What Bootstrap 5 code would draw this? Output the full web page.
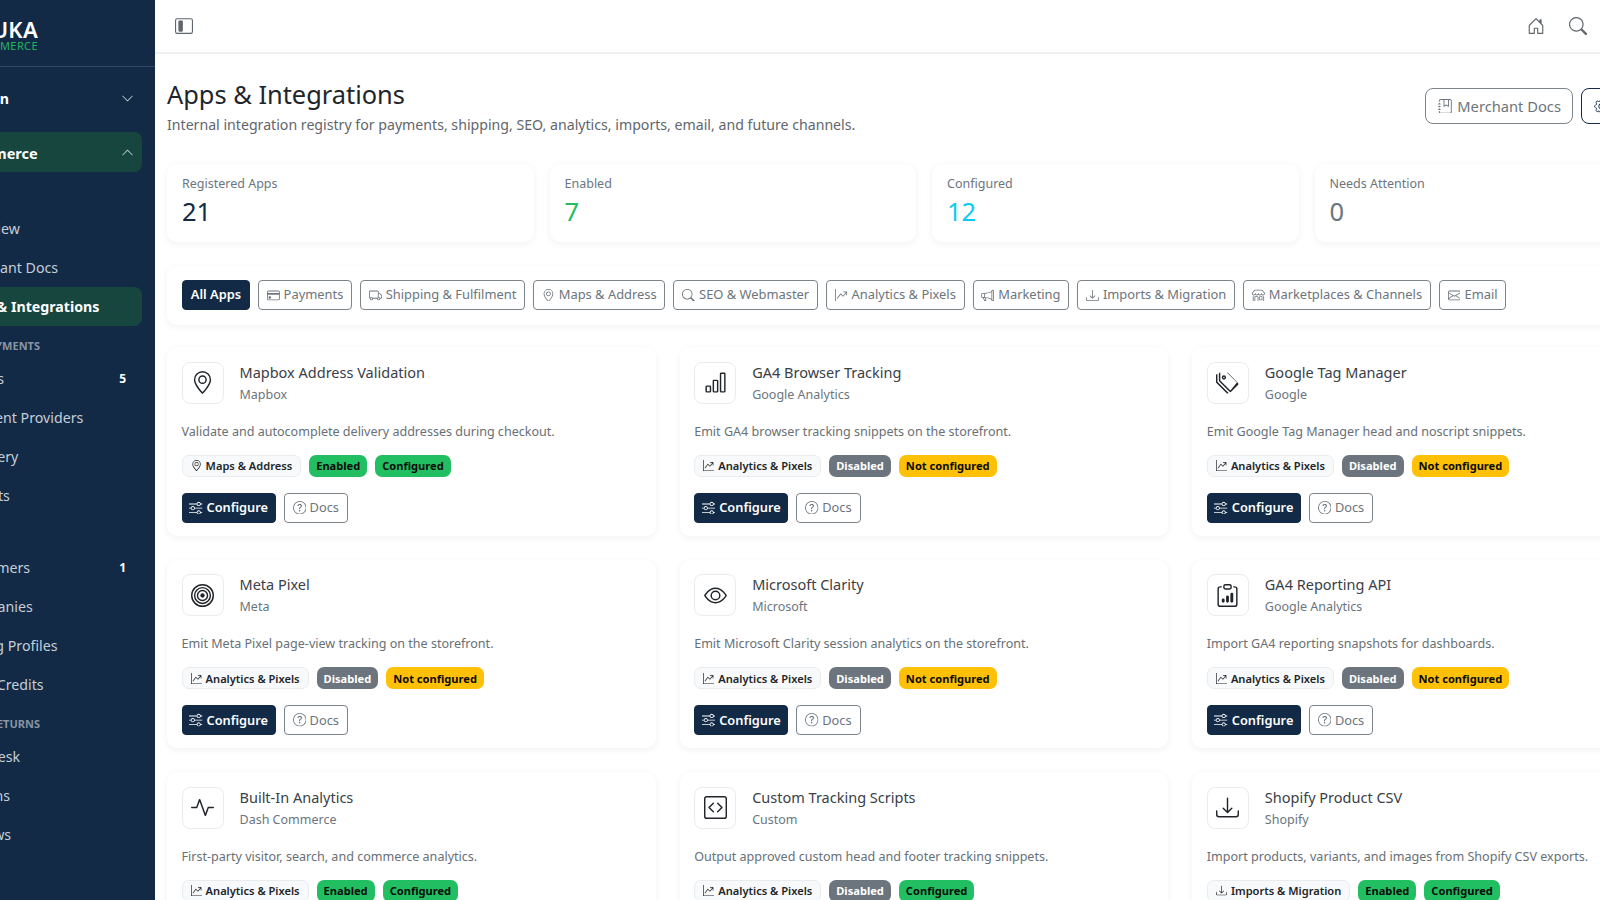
<!DOCTYPE html>
<html lang="en">
<head>
    <meta charset="UTF-8">
    <title>Apps & Integrations</title>
    <link href="https://cdn.jsdelivr.net/npm/bootstrap@5.3.0/dist/css/bootstrap.min.css" rel="stylesheet">
    <style>
        html, body { height: 900px; overflow: hidden; }
        body { font-family: "Noto Sans", sans-serif; font-size: 13px; color: #212529; background: #fff; }
        .ic { width: 1em; height: 1em; fill: currentColor; flex-shrink: 0; }

        .side { width: 260px; margin-left: -105px; flex-shrink: 0; height: 900px; background: #122a46; color: #c5ced8; padding-right: 13px; }
        .side-logo { height: 67px; margin-right: -13px; border-bottom: 1px solid rgba(255,255,255,.15); padding: 19px 0 0; }
        .logo-text { width: 143px; text-align: right; line-height: 1; }
        .logo-top { font-size: 22px; font-weight: 600; color: #fff; letter-spacing: .3px; line-height: 21px; }
        .logo-sub { font-size: 11px; color: #22b35e; letter-spacing: .4px; line-height: 11px; }
        .side-item { height: 39px; padding: 0 8px 0 63px; font-size: 14.2px; display: flex; align-items: center; justify-content: space-between; white-space: nowrap; }
        .side-item .ic { font-size: 13px; color: #c5ced8; }
        .side-top { margin-top: 12px; padding-left: 68px; font-weight: 700; color: #fff; }
        .side-open { height: 40px; margin-top: 14px; margin-bottom: 37px; padding-left: 65px; background: #17463f; border-radius: 8px; color: #fff; font-weight: 700; font-size: 14.5px; }
        .side-open span { padding-top: 3px; }
        .side-active { background: #17463f; border-radius: 8px; color: #fff; font-weight: 700; }
        .side-head { height: 33px; padding: 12px 102px 0 0; text-align: right; font-size: 11px; font-weight: 700; color: #8795a6; line-height: 16px; white-space: nowrap; }
        .side-count { font-size: 12px; font-weight: 700; color: #fff; margin-right: 8px; }

        .main-wrap { flex-grow: 1; min-width: 0; height: 900px; overflow: hidden; }
        .top-bar { height: 54px; border-bottom: 2px solid #eff0f1; padding: 0 13px 0 20px; color: #5f666d; }
        .top-bar .ic { font-size: 18px; }
        .page-body { width: 1526px; padding-left: 12px; }
        .page-title { font-size: 25.4px; font-weight: 400; line-height: 36px; margin: 0; color: #212529; }
        .page-sub { font-size: 14.15px; line-height: 22px; color: #5f666d; margin: 2px 0 0; }
        .title-row { padding-top: 22px; height: 110px; margin-right: -1px; }
        .head-btn { font-size: 14.7px; height: 36px; padding: 0 11.5px; border-radius: 8px; border-color: #7d848a; color: #6c757d; display: inline-flex; align-items: center; gap: 5px; margin-top: 12px; }
        .head-btn-dark { border-color: #122a46; color: #122a46; }

        .panel { border: 0; border-radius: 10px; box-shadow: 0 2px 7px rgba(20,30,50,.06); background: #fff; }
        .stat-panel { height: 78px; padding: 11px 15px; }
        .stat-label { font-size: 12.5px; color: #6c757d; line-height: 18px; }
        .stat-value { font-size: 25.5px; line-height: 36.5px; }
        .filter-panel { margin-top: 24px; height: 59px; padding: 14px 15px; }
        .filter-btn { font-size: 12.9px; height: 30px; padding: 0 7.75px; border-radius: 4px; border-color: #7d848a; color: #6c757d; display: inline-flex; align-items: center; gap: 4px; white-space: nowrap; }
        .filter-on { background: #122a46; border-color: #122a46; color: #fff; font-weight: 600; }

        .app-grid { margin-top: -2px; }
        .app-panel { height: 188.7px; padding: 14.5px; }
        .app-icon { width: 42px; height: 42px; border: 1px solid #e9ecef; border-radius: 8px; font-size: 23px; color: #212529; }
        .app-name { font-size: 14.5px; line-height: 20px; color: #3a4046; }
        .app-vendor { font-size: 12.5px; line-height: 18px; color: #6c757d; margin-top: 4px; }
        .app-desc { font-size: 12.55px; line-height: 18px; color: #687076; margin: 19px 0 14px; white-space: nowrap; }
        .tag-row { height: 22px; gap: 8px; }
        .tag { font-size: 11.1px; font-weight: 700; height: 22px; padding: 0 7px; border-radius: 7px; display: inline-flex; align-items: center; gap: 4px; white-space: nowrap; line-height: 1; }
        .tag-cat { background: #f8f9fa; border: 1px solid #e9ecef; color: #212529; font-weight: 600; padding: 0 8px; }
        .tag-on { background: #22bf62; color: #0b0b0b; }
        .tag-off { background: #6c757d; color: #fff; }
        .tag-warn { background: #ffc107; color: #0b0b0b; }
        .act-row { margin-top: 16px; gap: 8px; }
        .act-btn { font-size: 12.8px; height: 30px; padding: 0 6.5px; border-radius: 4px; display: inline-flex; align-items: center; gap: 4px; }
        .act-btn .ic { font-size: 13.5px; }
        .act-main { background: #122a46; border-color: #122a46; color: #fff; font-weight: 600; }
        .act-docs { border-color: #7d848a; color: #6c757d; gap: 3.5px; padding: 0 8px; }
    </style>
</head>
<body>
<svg class="d-none">
    <symbol id="i-geo" viewBox="0 0 16 16"><path d="M12.166 8.94c-.524 1.062-1.234 2.12-1.96 3.07A31.493 31.493 0 0 1 8 14.58a31.481 31.481 0 0 1-2.206-2.57c-.726-.95-1.436-2.008-1.96-3.07C3.304 7.867 3 6.862 3 6a5 5 0 0 1 10 0c0 .862-.305 1.867-.834 2.94zM8 16s6-5.686 6-10A6 6 0 0 0 2 6c0 4.314 6 10 6 10z"/><path d="M8 8a2 2 0 1 1 0-4 2 2 0 0 1 0 4zm0 1a3 3 0 1 0 0-6 3 3 0 0 0 0 6z"/></symbol>
    <symbol id="i-bars" viewBox="0 0 16 16"><path d="M4 11H2v3h2v-3zm5-4H7v7h2V7zm5-5v12h-2V2h2zm-2-1a1 1 0 0 0-1 1v12a1 1 0 0 0 1 1h2a1 1 0 0 0 1-1V2a1 1 0 0 0-1-1h-2zM6 7a1 1 0 0 1 1-1h2a1 1 0 0 1 1 1v7a1 1 0 0 1-1 1H7a1 1 0 0 1-1-1V7zm-5 4a1 1 0 0 1 1-1h2a1 1 0 0 1 1 1v3a1 1 0 0 1-1 1H2a1 1 0 0 1-1-1v-3z"/></symbol>
    <symbol id="i-tags" viewBox="0 0 16 16"><path d="M3 2v4.586l7 7L14.586 8l-7-7H3zM2 2a1 1 0 0 1 1-1h4.586a1 1 0 0 1 .707.293l7 7a1 1 0 0 1 0 1.414l-4.586 4.586a1 1 0 0 1-1.414 0l-7-7A1 1 0 0 1 2 6.586V2z"/><path d="M5.5 5a.5.5 0 1 1 0-1 .5.5 0 0 1 0 1zm0 1a1.5 1.5 0 1 0 0-3 1.5 1.5 0 0 0 0 3zM1 7.086a1 1 0 0 0 .293.707L8.75 15.25l-.043.043a1 1 0 0 1-1.414 0l-7-7A1 1 0 0 1 0 7.586V3a1 1 0 0 1 1-1v5.086z"/></symbol>
    <symbol id="i-target" viewBox="0 0 16 16"><path d="M8 15A7 7 0 1 1 8 1a7 7 0 0 1 0 14zm0 1A8 8 0 1 0 8 0a8 8 0 0 0 0 16z"/><path d="M8 13A5 5 0 1 1 8 3a5 5 0 0 1 0 10zm0 1A6 6 0 1 0 8 2a6 6 0 0 0 0 12z"/><path d="M8 11a3 3 0 1 1 0-6 3 3 0 0 1 0 6zm0 1a4 4 0 1 0 0-8 4 4 0 0 0 0 8z"/><path d="M9.5 8a1.5 1.5 0 1 1-3 0 1.5 1.5 0 0 1 3 0z"/></symbol>
    <symbol id="i-eye" viewBox="0 0 16 16"><path d="M16 8s-3-5.5-8-5.5S0 8 0 8s3 5.5 8 5.5S16 8 16 8zM1.173 8a13.133 13.133 0 0 1 1.66-2.043C4.12 4.668 5.88 3.5 8 3.5c2.12 0 3.879 1.168 5.168 2.457A13.133 13.133 0 0 1 14.828 8c-.058.087-.122.183-.195.288-.335.48-.83 1.12-1.465 1.755C11.879 11.332 10.119 12.5 8 12.5c-2.12 0-3.879-1.168-5.168-2.457A13.134 13.134 0 0 1 1.172 8z"/><path d="M8 5.5a2.5 2.5 0 1 0 0 5 2.5 2.5 0 0 0 0-5zM4.5 8a3.5 3.5 0 1 1 7 0 3.5 3.5 0 0 1-7 0z"/></symbol>
    <symbol id="i-clip" viewBox="0 0 16 16"><path d="M4 11a1 1 0 1 1 2 0v1a1 1 0 1 1-2 0v-1zm6-4a1 1 0 1 1 2 0v5a1 1 0 1 1-2 0V7zM7 9a1 1 0 0 1 2 0v3a1 1 0 1 1-2 0V9z"/><path d="M4 1.5H3a2 2 0 0 0-2 2V14a2 2 0 0 0 2 2h10a2 2 0 0 0 2-2V3.5a2 2 0 0 0-2-2h-1v1h1a1 1 0 0 1 1 1V14a1 1 0 0 1-1 1H3a1 1 0 0 1-1-1V3.5a1 1 0 0 1 1-1h1v-1z"/><path d="M9.5 1a.5.5 0 0 1 .5.5v1a.5.5 0 0 1-.5.5h-3a.5.5 0 0 1-.5-.5v-1a.5.5 0 0 1 .5-.5h3zm-3-1A1.5 1.5 0 0 0 5 1.5v1A1.5 1.5 0 0 0 6.5 4h3A1.5 1.5 0 0 0 11 2.5v-1A1.5 1.5 0 0 0 9.5 0h-3z"/></symbol>
    <symbol id="i-pulse" viewBox="0 0 16 16"><path fill-rule="evenodd" d="M6 2a.5.5 0 0 1 .47.33L10 12.036l1.53-4.208A.5.5 0 0 1 12 7.5h3.5a.5.5 0 0 1 0 1h-3.15l-1.88 5.17a.5.5 0 0 1-.94 0L6 3.964 4.47 8.171A.5.5 0 0 1 4 8.5H.5a.5.5 0 0 1 0-1h3.15l1.88-5.17A.5.5 0 0 1 6 2Z"/></symbol>
    <symbol id="i-code" viewBox="0 0 16 16"><path d="M14 1a1 1 0 0 1 1 1v12a1 1 0 0 1-1 1H2a1 1 0 0 1-1-1V2a1 1 0 0 1 1-1h12zM2 0a2 2 0 0 0-2 2v12a2 2 0 0 0 2 2h12a2 2 0 0 0 2-2V2a2 2 0 0 0-2-2H2z"/><path d="M6.854 4.646a.5.5 0 0 1 0 .708L4.207 8l2.647 2.646a.5.5 0 0 1-.708.708l-3-3a.5.5 0 0 1 0-.708l3-3a.5.5 0 0 1 .708 0zm2.292 0a.5.5 0 0 0 0 .708L11.793 8l-2.647 2.646a.5.5 0 0 0 .708.708l3-3a.5.5 0 0 0 0-.708l-3-3a.5.5 0 0 0-.708 0z"/></symbol>
    <symbol id="i-down" viewBox="0 0 16 16"><path d="M.5 9.9a.5.5 0 0 1 .5.5v2.5a1 1 0 0 0 1 1h12a1 1 0 0 0 1-1v-2.5a.5.5 0 0 1 1 0v2.5a2 2 0 0 1-2 2H2a2 2 0 0 1-2-2v-2.5a.5.5 0 0 1 .5-.5z"/><path d="M7.646 11.854a.5.5 0 0 0 .708 0l3-3a.5.5 0 0 0-.708-.708L8.5 10.293V1.5a.5.5 0 0 0-1 0v8.793L5.354 8.146a.5.5 0 1 0-.708.708l3 3z"/></symbol>
    <symbol id="i-graph" viewBox="0 0 16 16"><path fill-rule="evenodd" d="M0 0h1v15h15v1H0V0Zm10 3.5a.5.5 0 0 1 .5-.5h4a.5.5 0 0 1 .5.5v4a.5.5 0 0 1-1 0V4.9l-3.613 4.417a.5.5 0 0 1-.74.037L7.06 6.767l-3.656 5.027a.5.5 0 0 1-.808-.588l4-5.5a.5.5 0 0 1 .758-.06l2.609 2.61L13.445 4H10.5a.5.5 0 0 1-.5-.5Z"/></symbol>
    <symbol id="i-sliders" viewBox="0 0 16 16"><path fill-rule="evenodd" d="M11.5 2a1.5 1.5 0 1 0 0 3 1.5 1.5 0 0 0 0-3zM9.05 3a2.5 2.5 0 0 1 4.9 0H16v1h-2.05a2.5 2.5 0 0 1-4.9 0H0V3h9.05zM4.5 7a1.5 1.5 0 1 0 0 3 1.5 1.5 0 0 0 0-3zM2.05 8a2.5 2.5 0 0 1 4.9 0H16v1H6.95a2.5 2.5 0 0 1-4.9 0H0V8h2.05zm9.45 4a1.5 1.5 0 1 0 0 3 1.5 1.5 0 0 0 0-3zm-2.45 1a2.5 2.5 0 0 1 4.9 0H16v1h-2.05a2.5 2.5 0 0 1-4.9 0H0v-1h9.05z"/></symbol>
    <symbol id="i-help" viewBox="0 0 16 16"><path d="M8 15A7 7 0 1 1 8 1a7 7 0 0 1 0 14zm0 1A8 8 0 1 0 8 0a8 8 0 0 0 0 16z"/><path d="M5.255 5.786a.237.237 0 0 0 .241.247h.825c.138 0 .248-.113.266-.25.09-.656.54-1.134 1.342-1.134.686 0 1.314.343 1.314 1.168 0 .635-.374.927-.965 1.371-.673.489-1.206 1.06-1.168 1.987l.003.217a.25.25 0 0 0 .25.246h.811a.25.25 0 0 0 .25-.25v-.105c0-.718.273-.927 1.01-1.486.609-.463 1.244-.977 1.244-2.056 0-1.511-1.276-2.241-2.673-2.241-1.267 0-2.655.59-2.75 2.286zm1.557 5.763c0 .533.425.927 1.01.927.609 0 1.028-.394 1.028-.927 0-.552-.42-.94-1.029-.94-.584 0-1.009.388-1.009.94z"/></symbol>
    <symbol id="i-card" viewBox="0 0 16 16"><path d="M0 4a2 2 0 0 1 2-2h12a2 2 0 0 1 2 2v8a2 2 0 0 1-2 2H2a2 2 0 0 1-2-2V4zm2-1a1 1 0 0 0-1 1v1h14V4a1 1 0 0 0-1-1H2zm13 4H1v5a1 1 0 0 0 1 1h12a1 1 0 0 0 1-1V7z"/><path d="M2 10a1 1 0 0 1 1-1h1a1 1 0 0 1 1 1v1a1 1 0 0 1-1 1H3a1 1 0 0 1-1-1v-1z"/></symbol>
    <symbol id="i-truck" viewBox="0 0 16 16"><path d="M0 3.5A1.5 1.5 0 0 1 1.5 2h9A1.5 1.5 0 0 1 12 3.5V5h1.02a1.5 1.5 0 0 1 1.17.563l1.481 1.85a1.5 1.5 0 0 1 .329.938V10.5a1.5 1.5 0 0 1-1.5 1.5H14a2 2 0 1 1-4 0H5a2 2 0 1 1-3.998-.085A1.5 1.5 0 0 1 0 10.5v-7zm1.294 7.456A1.999 1.999 0 0 1 4.732 11h5.536a2.01 2.01 0 0 1 .732-.732V3.5a.5.5 0 0 0-.5-.5h-9a.5.5 0 0 0-.5.5v7a.5.5 0 0 0 .294.456zM12 10a2 2 0 0 1 1.732 1h.768a.5.5 0 0 0 .5-.5V8.35a.5.5 0 0 0-.11-.312l-1.48-1.85A.5.5 0 0 0 13.02 6H12v4zm-9 1a1 1 0 1 0 0 2 1 1 0 0 0 0-2zm9 0a1 1 0 1 0 0 2 1 1 0 0 0 0-2z"/></symbol>
    <symbol id="i-search" viewBox="0 0 16 16"><path d="M11.742 10.344a6.5 6.5 0 1 0-1.397 1.398h-.001c.03.04.062.078.098.115l3.85 3.85a1 1 0 0 0 1.415-1.414l-3.85-3.85a1.007 1.007 0 0 0-.115-.1zM12 6.5a5.5 5.5 0 1 1-11 0 5.5 5.5 0 0 1 11 0z"/></symbol>
    <symbol id="i-mega" viewBox="0 0 16 16"><path d="M13 2.5a1.5 1.5 0 0 1 3 0v11a1.5 1.5 0 0 1-3 0v-.214c-2.162-1.241-4.49-1.843-6.912-2.083l.405 2.712A1 1 0 0 1 5.51 15.1h-.548a1 1 0 0 1-.916-.599l-1.85-3.49a68.14 68.14 0 0 0-.202-.003A2.014 2.014 0 0 1 0 9V7a2.02 2.02 0 0 1 1.992-2.013 74.663 74.663 0 0 0 2.483-.075c3.043-.154 6.148-.849 8.525-2.199V2.5zm1 0v11a.5.5 0 0 0 1 0v-11a.5.5 0 0 0-1 0zm-1 1.35c-2.344 1.205-5.209 1.842-8 2.033v4.233c.18.01.359.022.537.036 2.568.189 5.093.744 7.463 1.993V3.85zm-9 6.215v-4.13a95.09 95.09 0 0 1-1.992.052A1.02 1.02 0 0 0 1 7v2c0 .55.448 1.002 1.006 1.009A60.49 60.49 0 0 1 4 10.065zm-.657.975 1.609 3.037.01.024h.548l-.002-.014-.443-2.966a68.019 68.019 0 0 0-1.722-.082z"/></symbol>
    <symbol id="i-shop" viewBox="0 0 16 16"><path d="M2.97 1.35A1 1 0 0 1 3.73 1h8.54a1 1 0 0 1 .76.35l2.609 3.044A1.5 1.5 0 0 1 16 5.37v.255a2.375 2.375 0 0 1-4.25 1.458A2.371 2.371 0 0 1 9.875 8 2.37 2.37 0 0 1 8 7.083 2.37 2.37 0 0 1 6.125 8a2.37 2.37 0 0 1-1.875-.917A2.375 2.375 0 0 1 0 5.625V5.37a1.5 1.5 0 0 1 .361-.976l2.61-3.045zm1.78 4.275a1.375 1.375 0 0 0 2.75 0 .5.5 0 0 1 1 0 1.375 1.375 0 0 0 2.75 0 .5.5 0 0 1 1 0 1.375 1.375 0 1 0 2.75 0V5.37a.5.5 0 0 0-.12-.325L12.27 2H3.73L1.12 5.045A.5.5 0 0 0 1 5.37v.255a1.375 1.375 0 0 0 2.75 0 .5.5 0 0 1 1 0zM1.5 8.5A.5.5 0 0 1 2 9v6h1v-5a1 1 0 0 1 1-1h3a1 1 0 0 1 1 1v5h6V9a.5.5 0 0 1 1 0v6h.5a.5.5 0 0 1 0 1H.5a.5.5 0 0 1 0-1H1V9a.5.5 0 0 1 .5-.5zM4 15h3v-5H4v5zm5-5a1 1 0 0 1 1-1h2a1 1 0 0 1 1 1v3a1 1 0 0 1-1 1h-2a1 1 0 0 1-1-1v-3zm3 0h-2v3h2v-3z"/></symbol>
    <symbol id="i-mail" viewBox="0 0 16 16"><path d="M0 4a2 2 0 0 1 2-2h12a2 2 0 0 1 2 2v8a2 2 0 0 1-2 2H2a2 2 0 0 1-2-2V4Zm2-1a1 1 0 0 0-1 1v.217l7 4.2 7-4.2V4a1 1 0 0 0-1-1H2Zm13 2.383-4.708 2.825L15 11.105V5.383Zm-.034 6.876-5.64-3.471L8 9.583l-1.326-.795-5.64 3.47A1 1 0 0 0 2 13h12a1 1 0 0 0 .966-.741ZM1 11.105l4.708-2.897L1 5.383v5.722Z"/></symbol>
    <symbol id="i-house" viewBox="0 0 16 16"><path d="M8.354 1.146a.5.5 0 0 0-.708 0l-6 6A.5.5 0 0 0 1.5 7.5v7a.5.5 0 0 0 .5.5h4.5a.5.5 0 0 0 .5-.5v-4h2v4a.5.5 0 0 0 .5.5H14a.5.5 0 0 0 .5-.5v-7a.5.5 0 0 0-.146-.354L13 5.793V2.5a.5.5 0 0 0-.5-.5h-1a.5.5 0 0 0-.5.5v1.293L8.354 1.146zM2.5 14V7.707l5.5-5.5 5.5 5.5V14H10v-4a.5.5 0 0 0-.5-.5h-3a.5.5 0 0 0-.5.5v4H2.5z"/></symbol>
    <symbol id="i-layout" viewBox="0 0 16 16"><path d="M14 2a1 1 0 0 1 1 1v10a1 1 0 0 1-1 1H2a1 1 0 0 1-1-1V3a1 1 0 0 1 1-1h12zM2 1a2 2 0 0 0-2 2v10a2 2 0 0 0 2 2h12a2 2 0 0 0 2-2V3a2 2 0 0 0-2-2H2z"/><path d="M3 4a1 1 0 0 1 1-1h2a1 1 0 0 1 1 1v8a1 1 0 0 1-1 1H4a1 1 0 0 1-1-1V4z"/></symbol>
    <symbol id="i-journal" viewBox="0 0 16 16"><path d="M6 8V1h1v6.117L8.743 6.07a.5.5 0 0 1 .514 0L11 7.117V1h1v7a.5.5 0 0 1-.757.429L9 7.083 6.757 8.43A.5.5 0 0 1 6 8z"/><path d="M3 0h10a2 2 0 0 1 2 2v12a2 2 0 0 1-2 2H3a2 2 0 0 1-2-2v-1h1v1a1 1 0 0 0 1 1h10a1 1 0 0 0 1-1V2a1 1 0 0 0-1-1H3a1 1 0 0 0-1 1v1H1V2a2 2 0 0 1 2-2z"/><path d="M1 5v-.5a.5.5 0 0 1 1 0V5h.5a.5.5 0 0 1 0 1h-2a.5.5 0 0 1 0-1H1zm0 3v-.5a.5.5 0 0 1 1 0V8h.5a.5.5 0 0 1 0 1h-2a.5.5 0 0 1 0-1H1zm0 3v-.5a.5.5 0 0 1 1 0v.5h.5a.5.5 0 0 1 0 1h-2a.5.5 0 0 1 0-1H1z"/></symbol>
    <symbol id="i-gear" viewBox="0 0 16 16"><path d="M8 4.754a3.246 3.246 0 1 0 0 6.492 3.246 3.246 0 0 0 0-6.492zM5.754 8a2.246 2.246 0 1 1 4.492 0 2.246 2.246 0 0 1-4.492 0z"/><path fill="none" stroke="currentColor" d="M9.3 1.5c-.4-1.3-2.2-1.3-2.6 0l-.1.3a1.4 1.4 0 0 1-2 .8l-.3-.2c-1.2-.6-2.5.7-1.9 1.9l.2.3a1.4 1.4 0 0 1-.8 2l-.3.1c-1.3.4-1.3 2.2 0 2.6l.3.1a1.4 1.4 0 0 1 .8 2l-.2.3c-.6 1.2.7 2.5 1.9 1.9l.3-.2a1.4 1.4 0 0 1 2 .8l.1.3c.4 1.3 2.2 1.3 2.6 0l.1-.3a1.4 1.4 0 0 1 2-.8l.3.2c1.2.6 2.5-.7 1.9-1.9l-.2-.3a1.4 1.4 0 0 1 .8-2l.3-.1c1.3-.4 1.3-2.2 0-2.6l-.3-.1a1.4 1.4 0 0 1-.8-2l.2-.3c.6-1.2-.7-2.5-1.9-1.9l-.3.2a1.4 1.4 0 0 1-2-.8z"/></symbol>
    <symbol id="i-chev-d" viewBox="0 0 16 16"><path d="M1.646 4.646a.5.5 0 0 1 .708 0L8 10.293l5.646-5.647a.5.5 0 0 1 .708.708l-6 6a.5.5 0 0 1-.708 0l-6-6a.5.5 0 0 1 0-.708z"/></symbol>
    <symbol id="i-chev-u" viewBox="0 0 16 16"><path d="M7.646 4.646a.5.5 0 0 1 .708 0l6 6a.5.5 0 0 1-.708.708L8 5.707l-5.646 5.647a.5.5 0 0 1-.708-.708l6-6z"/></symbol>
</svg>

<div class="d-flex">
    <!-- Sidebar, its left part lies outside the window -->
    <aside class="side">
        <div class="side-logo">
            <div class="logo-text">
                <div class="logo-top">DUKA</div>
                <div class="logo-sub">COMMERCE</div>
            </div>
        </div>
        <div class="side-item side-top"><span>Admin</span><svg class="ic"><use href="#i-chev-d"/></svg></div>
        <div class="side-item side-open"><span>Commerce</span><svg class="ic"><use href="#i-chev-u"/></svg></div>
        <div class="side-item">Overview</div>
        <div class="side-item">Merchant Docs</div>
        <div class="side-item side-active">Apps &amp; Integrations</div>
        <div class="side-head">PAYMENTS</div>
        <div class="side-item"><span>Orders</span><span class="side-count">5</span></div>
        <div class="side-item">Payment Providers</div>
        <div class="side-item">Recovery</div>
        <div class="side-item">Reports</div>
        <div class="side-head"></div>
        <div class="side-item"><span>Customers</span><span class="side-count">1</span></div>
        <div class="side-item">Companies</div>
        <div class="side-item">Pricing Profiles</div>
        <div class="side-item">Store Credits</div>
        <div class="side-head">RETURNS</div>
        <div class="side-item">Helpdesk</div>
        <div class="side-item">Returns</div>
        <div class="side-item">Reviews</div>
    </aside>

    <div class="main-wrap">
        <header class="top-bar d-flex align-items-center justify-content-between">
            <svg class="ic"><use href="#i-layout"/></svg>
            <div class="d-flex align-items-center gap-4">
                <svg class="ic"><use href="#i-house"/></svg>
                <svg class="ic"><use href="#i-search"/></svg>
            </div>
        </header>

        <div class="page-body">
            <div class="title-row d-flex justify-content-between">
                <div>
                    <h1 class="page-title">Apps &amp; Integrations</h1>
                    <p class="page-sub">Internal integration registry for payments, shipping, SEO, analytics, imports, email, and future channels.</p>
                </div>
                <div class="d-flex gap-2 align-items-start">
                    <a class="btn head-btn"><svg class="ic"><use href="#i-journal"/></svg>Merchant Docs</a>
                    <a class="btn head-btn head-btn-dark"><svg class="ic"><use href="#i-gear"/></svg>Settings</a>
                </div>
            </div>

            <div class="row g-3">
                <div class="col-3"><div class="card panel stat-panel"><div class="stat-label">Registered Apps</div><div class="stat-value" style="color:#122a46">21</div></div></div>
                <div class="col-3"><div class="card panel stat-panel"><div class="stat-label">Enabled</div><div class="stat-value" style="color:#22bf62">7</div></div></div>
                <div class="col-3"><div class="card panel stat-panel"><div class="stat-label">Configured</div><div class="stat-value" style="color:#0dcaf0">12</div></div></div>
                <div class="col-3"><div class="card panel stat-panel"><div class="stat-label">Needs Attention</div><div class="stat-value" style="color:#6c757d">0</div></div></div>
            </div>

            <div class="card panel filter-panel">
                <div id="filters" class="d-flex gap-2"></div>
            </div>

            <div id="apps" class="row g-4 app-grid"></div>
        </div>
    </div>
</div>

<script src="https://cdn.jsdelivr.net/npm/bootstrap@5.3.0/dist/js/bootstrap.bundle.min.js"></script>
<script>
    const icon = name => `<svg class="ic"><use href="#i-${name}"/></svg>`;

    const filters = [
        ['Payments', 'card'], ['Shipping & Fulfilment', 'truck'], ['Maps & Address', 'geo'],
        ['SEO & Webmaster', 'search'], ['Analytics & Pixels', 'graph'], ['Marketing', 'mega'],
        ['Imports & Migration', 'down'], ['Marketplaces & Channels', 'shop'], ['Email', 'mail']
    ];

    const apps = [
        { name: 'Mapbox Address Validation', vendor: 'Mapbox', icon: 'geo', desc: 'Validate and autocomplete delivery addresses during checkout.', cat: 'Maps & Address', catIcon: 'geo', on: true, conf: true },
        { name: 'GA4 Browser Tracking', vendor: 'Google Analytics', icon: 'bars', desc: 'Emit GA4 browser tracking snippets on the storefront.', cat: 'Analytics & Pixels', catIcon: 'graph', on: false, conf: false },
        { name: 'Google Tag Manager', vendor: 'Google', icon: 'tags', desc: 'Emit Google Tag Manager head and noscript snippets.', cat: 'Analytics & Pixels', catIcon: 'graph', on: false, conf: false },
        { name: 'Meta Pixel', vendor: 'Meta', icon: 'target', desc: 'Emit Meta Pixel page-view tracking on the storefront.', cat: 'Analytics & Pixels', catIcon: 'graph', on: false, conf: false },
        { name: 'Microsoft Clarity', vendor: 'Microsoft', icon: 'eye', desc: 'Emit Microsoft Clarity session analytics on the storefront.', cat: 'Analytics & Pixels', catIcon: 'graph', on: false, conf: false },
        { name: 'GA4 Reporting API', vendor: 'Google Analytics', icon: 'clip', desc: 'Import GA4 reporting snapshots for dashboards.', cat: 'Analytics & Pixels', catIcon: 'graph', on: false, conf: false },
        { name: 'Built-In Analytics', vendor: 'Dash Commerce', icon: 'pulse', desc: 'First-party visitor, search, and commerce analytics.', cat: 'Analytics & Pixels', catIcon: 'graph', on: true, conf: true },
        { name: 'Custom Tracking Scripts', vendor: 'Custom', icon: 'code', desc: 'Output approved custom head and footer tracking snippets.', cat: 'Analytics & Pixels', catIcon: 'graph', on: false, conf: true },
        { name: 'Shopify Product CSV', vendor: 'Shopify', icon: 'down', desc: 'Import products, variants, and images from Shopify CSV exports.', cat: 'Imports & Migration', catIcon: 'down', on: true, conf: true }
    ];

    const esc = s => s.replace(/&/g, '&amp;');

    document.getElementById('filters').innerHTML =
        `<a class="btn filter-btn filter-on">All Apps</a>` +
        filters.map(([label, ic]) => `<a class="btn filter-btn">${icon(ic)}${esc(label)}</a>`).join('');

    document.getElementById('apps').innerHTML = apps.map(app => `
        <div class="col-4">
            <div class="card panel app-panel">
                <div class="d-flex gap-3">
                    <div class="app-icon d-flex align-items-center justify-content-center">${icon(app.icon)}</div>
                    <div>
                        <div class="app-name">${app.name}</div>
                        <div class="app-vendor">${app.vendor}</div>
                    </div>
                </div>
                <p class="app-desc">${app.desc}</p>
                <div class="d-flex tag-row">
                    <span class="tag tag-cat">${icon(app.catIcon)}${esc(app.cat)}</span>
                    <span class="tag ${app.on ? 'tag-on' : 'tag-off'}">${app.on ? 'Enabled' : 'Disabled'}</span>
                    <span class="tag ${app.conf ? 'tag-on' : 'tag-warn'}">${app.conf ? 'Configured' : 'Not configured'}</span>
                </div>
                <div class="d-flex act-row">
                    <a class="btn act-btn act-main">${icon('sliders')}Configure</a>
                    <a class="btn act-btn act-docs">${icon('help')}Docs</a>
                </div>
            </div>
        </div>`).join('');
</script>
</body>
</html>
